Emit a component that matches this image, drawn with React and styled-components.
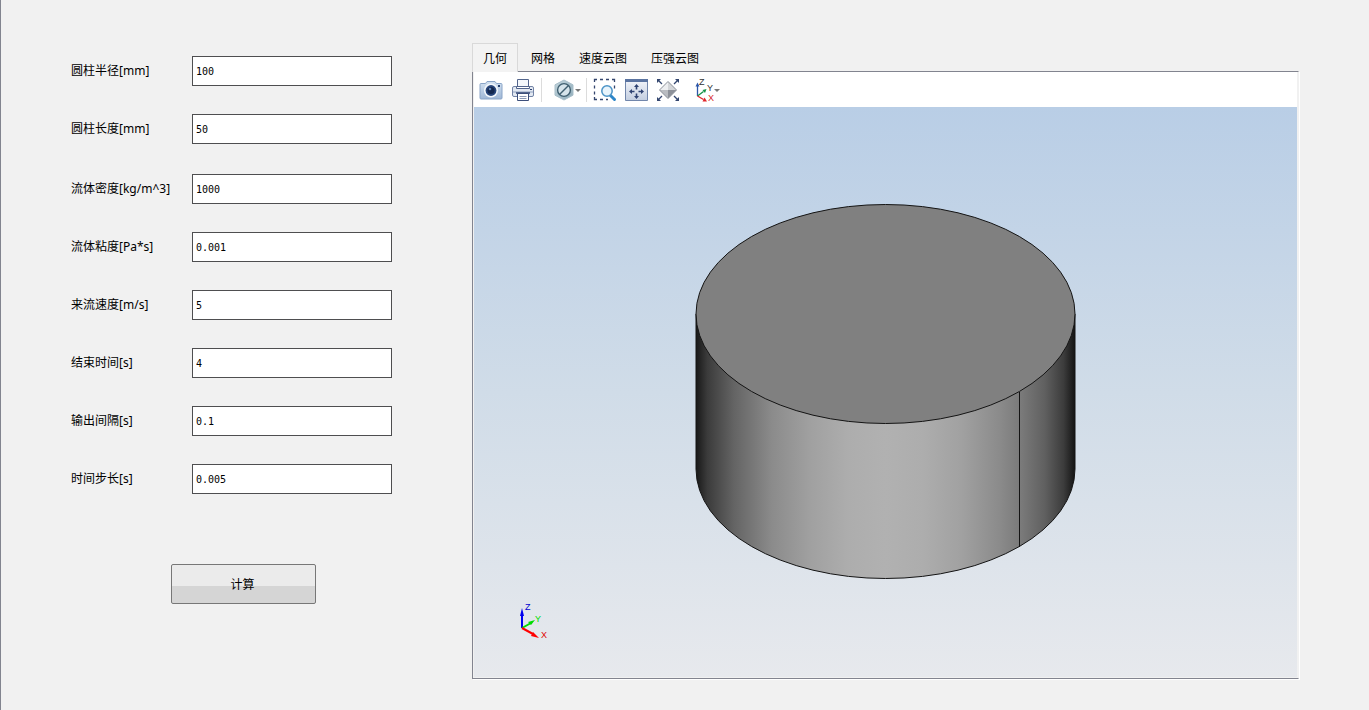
import React, { useState } from "react";

import styled, { createGlobalStyle } from "styled-components";

const geometryFields = [
  { id: "radius", label: "圆柱半径[mm]", value: "100" },
  { id: "length", label: "圆柱长度[mm]", value: "50" },
];

const flowFields = [
  { id: "density", label: "流体密度[kg/m^3]", value: "1000" },
  { id: "viscosity", label: "流体粘度[Pa*s]", value: "0.001" },
  { id: "velocity", label: "来流速度[m/s]", value: "5" },
  { id: "endTime", label: "结束时间[s]", value: "4" },
  { id: "interval", label: "输出间隔[s]", value: "0.1" },
  { id: "timeStep", label: "时间步长[s]", value: "0.005" },
];

const tabs = ["几何", "网格", "速度云图", "压强云图"];

function Field({ id, label, value }) {
  return (
    <Row>
      <Label htmlFor={id}>{label}</Label>
      <Input id={id} type="text" defaultValue={value} />
    </Row>
  );
}

function App() {
  const [active, setActive] = useState(0);

  return (
    <>
      <GlobalStyle />
      <Page>
        <Form onSubmit={(e) => e.preventDefault()}>
          <Group>
            {geometryFields.map((f) => (
              <Field key={f.id} {...f} />
            ))}
          </Group>
          <Group>
            {flowFields.map((f) => (
              <Field key={f.id} {...f} />
            ))}
          </Group>
          <Submit type="submit">计算</Submit>
        </Form>

        <Viewer>
          <TabList role="tablist">
            {tabs.map((name, i) => (
              <Tab
                key={name}
                type="button"
                role="tab"
                aria-selected={i === active}
                $active={i === active}
                onClick={() => setActive(i)}
              >
                {name}
              </Tab>
            ))}
          </TabList>
          <Panel role="tabpanel">
            <Toolbar role="toolbar">
              <ToolButton type="button" aria-label="截图">
                <CameraIcon />
              </ToolButton>
              <ToolButton type="button" aria-label="打印">
                <PrinterIcon />
              </ToolButton>
              <Separator />
              <MenuButton type="button" aria-label="显示">
                <HexIcon />
                <Caret />
              </MenuButton>
              <Separator />
              <ToolButton type="button" aria-label="框选缩放">
                <ZoomBoxIcon />
              </ToolButton>
              <ToolButton type="button" aria-label="适合窗口">
                <FitIcon />
              </ToolButton>
              <ToolButton type="button" aria-label="旋转">
                <RotateIcon />
              </ToolButton>
              <MenuButton type="button" aria-label="视图方向">
                <AxesIcon />
                <Caret />
              </MenuButton>
            </Toolbar>
            <Canvas>
              <Cylinder />
              <Triad />
            </Canvas>
          </Panel>
        </Viewer>
      </Page>
    </>
  );
}

export default App;

function CameraIcon() {
  return (
    <svg width="24" height="24" viewBox="0 0 24 24">
      <defs>
        <linearGradient id="cam" x1="0" y1="0" x2="0" y2="1">
          <stop offset="0" stopColor="#d3e2f1" />
          <stop offset="1" stopColor="#9fb7d6" />
        </linearGradient>
      </defs>
      <path
        d="M2 5.5h4.5l1.5-2h8l1.5 2H22q1 0 1 1V20q0 1-1 1H2q-1 0-1-1V6.500q0-1 1-1z"
        fill="url(#cam)"
        stroke="#8aa5c8"
      />
      <circle cx="12" cy="12.500" r="7" fill="#f4f8fc" />
      <circle cx="12" cy="12.500" r="5.4" fill="#27457a" />
      <circle cx="12" cy="12.500" r="3.6" fill="#14284f" />
      <circle cx="11" cy="11" r="1.3" fill="#5f83b3" />
      <path d="M19 7h2v2h-2z" fill="#24406f" />
    </svg>
  );
}

function PrinterIcon() {
  return (
    <svg width="24" height="24" viewBox="0 0 24 24">
      <path d="M6.5 9.5v-8h11v8" fill="#f4f7fb" stroke="#53658c" />
      <path
        d="M3 8.5h18q1.5 0 1.5 1.5v7q0 1.5-1.5 1.5H3q-1.5 0-1.5-1.5v-7q0-1.5 1.5-1.5z"
        fill="#e3e9f2"
        stroke="#7384a6"
      />
      <path d="M5.5 8.5h13v2h-13z" fill="#fff" stroke="#53658c" />
      <path d="M2 13h20v2H2z" fill="#b9c5d9" />
      <path d="M19 11.5h2" stroke="#2b3f6c" />
      <path d="M6.5 15.5h11v7h-11z" fill="#fff" stroke="#3c4f7b" />
      <path d="M5 15h14" stroke="#3c4f7b" strokeWidth="1.6" />
      <path d="M8.5 18.5h7M8.5 20.5h7" stroke="#8a98b4" />
    </svg>
  );
}

function HexIcon() {
  return (
    <svg width="22" height="24" viewBox="0 0 22 24">
      <defs>
        <linearGradient id="hex" x1="0" y1="0" x2="1" y2="1">
          <stop offset="0" stopColor="#c3d5dd" />
          <stop offset="1" stopColor="#8eabb9" />
        </linearGradient>
      </defs>
      <path
        d="M11 2l9 4.8v10.4L11 22l-9-4.800V6.800z"
        fill="url(#hex)"
        stroke="#a9bfca"
      />
      <circle
        cx="11"
        cy="12"
        r="6.4"
        fill="#d6e4eb"
        stroke="#3f5f70"
        strokeWidth="1.4"
      />
      <path d="M6.500 16.500l9-9" stroke="#3f5f70" strokeWidth="1.500" />
    </svg>
  );
}

function ZoomBoxIcon() {
  return (
    <svg width="24" height="24" viewBox="0 0 24 24">
      <path
        d="M1.5 4V1.500H4M7 1.500h3M13 1.500h3M19 1.500h2.500V4M1.500 7.500v3M1.500 13.500v3M1.500 19v2.500H4M7 21.500h3M13 21.500h2M21.500 7.500v3"
        fill="none"
        stroke="#34466e"
        strokeWidth="1.300"
      />
      <path
        d="M17.500 17.500l4 4"
        stroke="#2d86c8"
        strokeWidth="3"
        strokeLinecap="round"
      />
      <circle
        cx="14"
        cy="13"
        r="5.200"
        fill="#e8f4fc"
        stroke="#4b93c6"
        strokeWidth="1.500"
      />
    </svg>
  );
}

function FitIcon() {
  return (
    <svg width="24" height="24" viewBox="0 0 24 24">
      <defs>
        <linearGradient id="fit" x1="0" y1="0" x2="0" y2="1">
          <stop offset="0" stopColor="#f3f5fa" />
          <stop offset="1" stopColor="#c3cee0" />
        </linearGradient>
      </defs>
      <path d="M.5 1.5h22v21H.5z" fill="url(#fit)" stroke="#7186ab" />
      <path d="M0 1h23v3H0z" fill="#5a73a0" />
      <path
        d="M11.500 6l2.500 3h-5zM11.500 21l2.500-3h-5zM4 13.500l3-2.500v5zM19 13.500l-3-2.500v5z"
        fill="#2f4372"
      />
      <path
        d="M11.500 8.500v3M11.500 15.500v3M6.500 13.500h3M13.500 13.500h3"
        stroke="#2f4372"
        strokeWidth="1.600"
      />
    </svg>
  );
}

function RotateIcon() {
  return (
    <svg width="24" height="24" viewBox="0 0 24 24">
      <path
        d="M1 2l4 4M21 2l-4 4M1 22l4-4M21 22l-4-4"
        stroke="#33466f"
        strokeWidth="1.300"
      />
      <path
        d="M0 1h4L0 5zM22 1h-4l4 4zM0 23h4l-4-4zM22 23h-4l4-4z"
        fill="#33466f"
      />
      <path d="M11 3.500l8.500 8.500H11z" fill="#d3d5d8" />
      <path d="M11 3.500L2.500 12H11z" fill="#eeeff1" />
      <path d="M2.500 12H11v8.500z" fill="#b9bcc1" />
      <path d="M19.500 12H11v8.500z" fill="#8d9199" />
      <path d="M11 3.500l8.500 8.500-8.500 8.500L2.500 12z" fill="none" stroke="#8b9099" />
    </svg>
  );
}

function AxesIcon() {
  return (
    <svg width="20" height="24" viewBox="0 0 20 24">
      <path d="M3.5 18V8" stroke="#2c56a8" strokeWidth="1.300" />
      <path d="M3.5 4.500l2 4h-4z" fill="#2c56a8" />
      <path d="M3.500 18l6-4.500" stroke="#169447" strokeWidth="1.300" />
      <path d="M12.500 11l-1.500 4-2.500-3z" fill="#169447" />
      <path d="M3.500 18l6 3.500" stroke="#e0262c" strokeWidth="1.300" />
      <path d="M13 23.500H8.500l2-4z" fill="#e0262c" />
      <AxisText x="5" y="7" fill="#333">
        Z
      </AxisText>
      <AxisText x="13" y="13" fill="#333">
        Y
      </AxisText>
      <AxisText x="14" y="23" fill="#d6262c">
        X
      </AxisText>
    </svg>
  );
}

function Caret() {
  return (
    <svg width="6" height="4" viewBox="0 0 6 4">
      <path d="M0 1h6L3 4z" fill="#777" />
    </svg>
  );
}

function Cylinder() {
  return (
    <svg width="381" height="376" viewBox="0 0 381 376">
      <defs>
        <linearGradient id="side" x1="0" y1="0" x2="1" y2="0">
          <stop offset="0" stopColor="#181818" />
          <stop offset="0.03" stopColor="#3b3b3b" />
          <stop offset="0.1" stopColor="#646464" />
          <stop offset="0.2" stopColor="#8b8b8b" />
          <stop offset="0.3" stopColor="#a0a0a0" />
          <stop offset="0.4" stopColor="#adadad" />
          <stop offset="0.5" stopColor="#b1b1b1" />
          <stop offset="0.6" stopColor="#adadad" />
          <stop offset="0.7" stopColor="#a1a1a1" />
          <stop offset="0.8" stopColor="#8b8b8b" />
          <stop offset="0.86" stopColor="#797979" />
          <stop offset="0.92" stopColor="#606060" />
          <stop offset="0.97" stopColor="#3c3c3c" />
          <stop offset="1" stopColor="#141414" />
        </linearGradient>
      </defs>
      <path
        d="M1 110v155a189.5 109.5 0 0 0 379 0V110z"
        fill="url(#side)"
        stroke="#141414"
      />
      <path d="M324.5 188v155" stroke="#141414" />
      <ellipse
        cx="190.5"
        cy="110"
        rx="189.5"
        ry="109.5"
        fill="#808080"
        stroke="#141414"
      />
    </svg>
  );
}

function Triad() {
  return (
    <TriadSvg width="32" height="40" viewBox="0 0 32 40">
      <path d="M4 27V11" stroke="#0000f0" strokeWidth="2" />
      <path d="M4 7l2 8H2z" fill="#0000f0" />
      <path d="M4 27l9-5" stroke="#00dc00" strokeWidth="2" />
      <path d="M17 19l-4 5-3-3z" fill="#00dc00" />
      <path d="M4 27l11 6" stroke="#f00" strokeWidth="2" />
      <path d="M21 37l-8-2 2-4z" fill="#f00" />
      <AxisText x="7" y="9" fill="#0000d0">
        Z
      </AxisText>
      <AxisText x="17" y="21" fill="#00dc00">
        Y
      </AxisText>
      <AxisText x="23" y="37" fill="#e00000">
        X
      </AxisText>
    </TriadSvg>
  );
}

const GlobalStyle = createGlobalStyle`
  * {
    box-sizing: border-box;
  }

  body {
    margin: 0;
    background: #f1f1f1;
    color: #000;
    font: 12px/16px "Noto Sans", "Noto Sans CJK SC", sans-serif;
  }
`;

const Page = styled.main`
  display: flex;
  align-items: stretch;
  min-height: 100vh;
  padding: 43px 70px 31px 70px;
  border-left: 1px solid #82848f;
`;

const Form = styled.form`
  display: flex;
  flex-direction: column;
  gap: 30px;
  flex: none;
  width: 321px;
  padding-top: 13px;
  margin-right: 80px;
`;

const Group = styled.div`
  display: flex;
  flex-direction: column;
  gap: 28px;
`;

const Row = styled.div`
  display: flex;
  align-items: center;
  justify-content: space-between;
`;

const Label = styled.label`
  white-space: nowrap;
`;

const Input = styled.input`
  width: 200px;
  height: 30px;
  padding: 0 3px;
  border: 1px solid #4e4e50;
  border-radius: 0;
  background: #fff;
  color: #000;
  font: 10px "DejaVu Sans Mono", monospace;
  outline: none;
`;

const Submit = styled.button`
  width: 145px;
  height: 40px;
  margin: 40px 0 0 100px;
  padding: 0 2px 2px 0;
  border: 1px solid #777;
  border-radius: 2px;
  background: linear-gradient(#ebebeb 54%, #d5d5d5 54%);
  color: #000;
  font: 12px "Noto Sans CJK SC", sans-serif;
`;

const Viewer = styled.section`
  display: flex;
  flex-direction: column;
  flex: 1;
  min-width: 0;
`;

const TabList = styled.div`
  display: flex;
  gap: 2px;
  height: 28px;
`;

const Tab = styled.button`
  position: relative;
  height: 29px;
  padding: 0 10px 2px;
  border: 1px solid ${(props) => (props.$active ? "#d9d9d9" : "transparent")};
  border-bottom: 0;
  background: ${(props) => (props.$active ? "#f3f3f3" : "transparent")};
  color: #000;
  font: 12px "Noto Sans CJK SC", sans-serif;
`;

const Panel = styled.div`
  display: flex;
  flex-direction: column;
  flex: 1;
  padding: 0 1px 1px;
  border: 1px solid #82848f;
  border-right-color: #f1f1f1;
  box-shadow: 1px 1px #fff;
`;

const Toolbar = styled.div`
  display: flex;
  align-items: center;
  gap: 4px;
  height: 35px;
  padding: 0 3px;
  background: #fff;
`;

const ToolButton = styled.button`
  display: flex;
  align-items: center;
  height: 28px;
  padding: 0 2px;
  border: 0;
  background: none;
`;

const MenuButton = styled(ToolButton)`
  padding: 0 1px 0 7px;
`;

const Separator = styled.span`
  width: 1px;
  height: 24px;
  background: #dcdcdc;
`;

const Canvas = styled.div`
  position: relative;
  display: flex;
  align-items: center;
  justify-content: center;
  flex: 1;
  background: linear-gradient(#b9cee6, #d0dce8 50%, #e7e9ed);
`;

const TriadSvg = styled.svg`
  position: absolute;
  left: 44px;
  bottom: 36px;
`;

const AxisText = styled.text`
  font: 9px "Liberation Sans", sans-serif;
`;
